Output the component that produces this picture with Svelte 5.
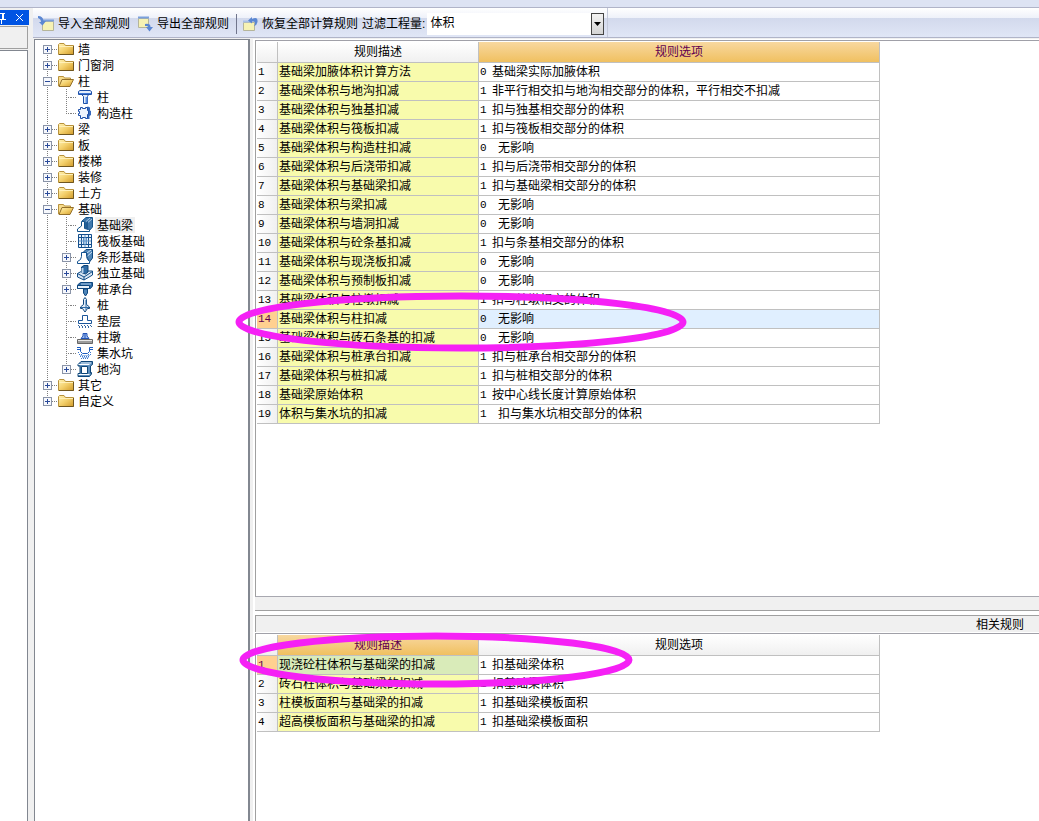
<script lang="ts">
  type TreeNode = { label: string; icon: string; open?: boolean; children?: TreeNode[] };
  type Rule = { name: string; code: number; option: string; indent?: boolean };

  const tree: TreeNode[] = $state([
    { label: '墙', icon: 'folder', children: [] },
    { label: '门窗洞', icon: 'folder', children: [] },
    {
      label: '柱',
      icon: 'folder',
      open: true,
      children: [
        { label: '柱', icon: 'column' },
        { label: '构造柱', icon: 'tie' },
      ],
    },
    { label: '梁', icon: 'folder', children: [] },
    { label: '板', icon: 'folder', children: [] },
    { label: '楼梯', icon: 'folder', children: [] },
    { label: '装修', icon: 'folder', children: [] },
    { label: '土方', icon: 'folder', children: [] },
    {
      label: '基础',
      icon: 'folder',
      open: true,
      children: [
        { label: '基础梁', icon: 'beam' },
        { label: '筏板基础', icon: 'raft' },
        { label: '条形基础', icon: 'strip', children: [] },
        { label: '独立基础', icon: 'isolated', children: [] },
        { label: '桩承台', icon: 'cap', children: [] },
        { label: '桩', icon: 'pile' },
        { label: '垫层', icon: 'cushion' },
        { label: '柱墩', icon: 'pier' },
        { label: '集水坑', icon: 'sump' },
        { label: '地沟', icon: 'trench', children: [] },
      ],
    },
    { label: '其它', icon: 'folder', children: [] },
    { label: '自定义', icon: 'folder', children: [] },
  ]);

  const rules: Rule[] = [
    { name: '基础梁加腋体积计算方法', code: 0, option: '基础梁实际加腋体积' },
    { name: '基础梁体积与地沟扣减', code: 1, option: '非平行相交扣与地沟相交部分的体积，平行相交不扣减' },
    { name: '基础梁体积与独基扣减', code: 1, option: '扣与独基相交部分的体积' },
    { name: '基础梁体积与筏板扣减', code: 1, option: '扣与筏板相交部分的体积' },
    { name: '基础梁体积与构造柱扣减', code: 0, option: '无影响', indent: true },
    { name: '基础梁体积与后浇带扣减', code: 1, option: '扣与后浇带相交部分的体积' },
    { name: '基础梁体积与基础梁扣减', code: 1, option: '扣与基础梁相交部分的体积' },
    { name: '基础梁体积与梁扣减', code: 0, option: '无影响', indent: true },
    { name: '基础梁体积与墙洞扣减', code: 0, option: '无影响', indent: true },
    { name: '基础梁体积与砼条基扣减', code: 1, option: '扣与条基相交部分的体积' },
    { name: '基础梁体积与现浇板扣减', code: 0, option: '无影响', indent: true },
    { name: '基础梁体积与预制板扣减', code: 0, option: '无影响', indent: true },
    { name: '基础梁体积与柱墩扣减', code: 1, option: '扣与柱墩相交的体积' },
    { name: '基础梁体积与柱扣减', code: 0, option: '无影响', indent: true },
    { name: '基础梁体积与砖石条基的扣减', code: 0, option: '无影响', indent: true },
    { name: '基础梁体积与桩承台扣减', code: 1, option: '扣与桩承台相交部分的体积' },
    { name: '基础梁体积与桩扣减', code: 1, option: '扣与桩相交部分的体积' },
    { name: '基础梁原始体积', code: 1, option: '按中心线长度计算原始体积' },
    { name: '体积与集水坑的扣减', code: 1, option: '扣与集水坑相交部分的体积', indent: true },
  ];

  const related: Rule[] = [
    { name: '现浇砼柱体积与基础梁的扣减', code: 1, option: '扣基础梁体积' },
    { name: '砖石柱体积与基础梁的扣减', code: 1, option: '扣基础梁体积' },
    { name: '柱模板面积与基础梁的扣减', code: 1, option: '扣基础梁模板面积' },
    { name: '超高模板面积与基础梁的扣减', code: 1, option: '扣基础梁模板面积' },
  ];

  let currentNode = $state('基础梁');
  let currentRule = $state(13);
  let currentRelated = $state(0);
</script>

{#snippet nodeIcon(kind: string, open: boolean)}
  <svg class="icon" viewBox="0 0 16 16" aria-hidden="true">
    {#if kind === 'folder' && open}
      <path d="M.5 13V3.500h5l1 1.500h6v3" fill="#f7dc8c" stroke="#b8923c" />
      <path d="M1 13.500 4 6.500h11.500l-3.500 7z" fill="url(#gold)" stroke="#94702a" />
    {:else if kind === 'folder'}
      <path d="M.5 13.500V3.500l1-1H6l1.500 2h8v9z" fill="url(#gold)" stroke="#b8923c" />
      <path d="M1 5.500h14" stroke="#fff0b8" />
      <path d="M1 13.500h14.500V5" fill="none" stroke="#6f5620" />
    {:else if kind === 'column'}
      <path d="M1.500 2.500 3 1.500h10l1.500 1v3h-13zM4.500 5.500h7L10.500 7.500v7h-4v-7z" fill="#e3edfc" stroke="#1c4fa8" />
      <path d="M9.500 8v6" stroke="#5b8ee0" stroke-width="2" />
      <path d="M2 4.500h12" stroke="#3f78d6" />
    {:else if kind === 'tie'}
      <path d="m8 3 3-1.500 2 1v3l1 .5v4l-1.500 1v3L10 14z" fill="#3569bd" />
      <path d="M3.500 2.500h2v1h3v-1h2v3h1v4h-1v4h-2v-1h-3v1h-2v-3h-2v-2h1v-2h-1v-2h2z" fill="#eef4fd" stroke="#1c4fa8" />
    {:else if kind === 'beam'}
      <path d="M5 4 9 .5h6.500V10L12 14H8V5z" fill="#3f78ad" stroke="#14548c" />
      <path d="M9 4.500 13 1M9 7l6-5" stroke="#a9c9e6" />
      <path d="M.5 14.500V12L4.500 9V4.500h3v7l5 1v2z" fill="#fff" stroke="#14548c" />
      <path d="M8.500 11.500V6L11 4v9z" fill="#1f5b93" />
    {:else if kind === 'raft'}
      <path d="M1.500 1.500h13v13h-13z" fill="#eaf2fa" stroke="#134f8d" />
      <path d="M4.500 2v12M11.500 2v12M2 4.500h12M2 11.500h12" fill="none" stroke="#134f8d" />
      <path d="M8 2v12M2 8h12M6.500 5v6M9.500 5v6" stroke="#5e93c7" />
    {:else if kind === 'strip'}
      <path d="M6 3.500 9 .5h6.500V9L12.500 13 10 8V4z" fill="#5187b9" stroke="#0e477f" />
      <path d="m10 4 4-3M10.500 7 15 3" stroke="#c8def3" />
      <path d="M.5 14.500v-2l3-2 1-3v-4h5v4l1 3 2 2v2z" fill="#fff" stroke="#12518f" />
    {:else if kind === 'isolated'}
      <path d="M.5 8.500 5 6h10.500v4L7 15l-6.500-3z" fill="#d8e6f4" stroke="#114c86" />
      <path d="M.5 8.500 7 12l8.500-5.500M7 12v3" fill="none" stroke="#114c86" />
      <path d="M4.500 2 7 .5h4V7L8.500 9l-4-1.500z" fill="#2f6ba5" stroke="#0d4275" />
      <path d="M5.500 3v5" stroke="#b7d2ec" stroke-width="2" />
    {:else if kind === 'cap'}
      <path d="m.5 4 3-2.500h12V5l-2 2.500H.5z" fill="#2e6ba6" stroke="#0e477f" />
      <path d="M.5 4.500h12v3H.5z" fill="#e8f1fa" stroke="#0e477f" />
      <path d="M4 3h10" stroke="#b7d2ec" />
      <path d="M6.500 8h4v4L8.500 15l-2-3z" fill="#4d84b8" stroke="#0e477f" />
    {:else if kind === 'pile'}
      <path d="m8 .5 1.500 2v5l3 2.500v1.500h-2L8 15l-2.500-3.500h-2V10l3-2.500v-5z" fill="#e2edf8" stroke="#0e477f" />
      <path d="M9 3v10M4 10.500h8" stroke="#2e6ba6" />
    {:else if kind === 'cushion'}
      <path d="M5.500 7.500v-5h5v5h4v3h-13v-3z" fill="#fff" stroke="#1b569a" />
      <path d="M1 12.500h14M2 14.500h12" stroke="#3566a0" stroke-dasharray="1 2" />
      <path d="M2 13.500h13" stroke="#3566a0" stroke-dasharray="1 2" />
    {:else if kind === 'pier'}
      <path d="M.5 10.500h15v4H.5z" fill="#9c9c9c" stroke="#666" />
      <path d="M1 11.500h14" stroke="#e8e8e8" />
      <path d="M4 9.500 6 7V4.500h4V7l2 2.500z" fill="#9cbcf0" stroke="#2353b5" />
      <path d="M8 5v4" stroke="#2353b5" />
    {:else if kind === 'sump'}
      <path d="M0 4.500h3M13 4.500h3" stroke="#1b5cc0" />
      <path d="M0 2.500h3.500v4l2 2h5l2-2v-4H16" fill="none" stroke="#1b5cc0" />
      <path d="M1 7.500h2M13 7.500h2M2 9.500h3M11 9.500h3M3 11.500h10M4 13.500h8" stroke="#3b78cf" stroke-dasharray="1 1" />
      <path d="M3 10.500h10M5 12.500h7" stroke="#9fc0ec" />
    {:else if kind === 'trench'}
      <path d="m1 3.500 3-3h11.500v3l-2 1.500v7l1-.5V13l-2 2.500H1v-3h2V5H1z" fill="#5e8fbc" stroke="#0f4677" />
      <path d="M4 2h10" stroke="#dce9f5" />
      <path d="M1.500 3.500h11M1.500 13.500h11" stroke="#fff" />
      <path d="M4.500 5.500h6v7h-6z" fill="#fff" stroke="#0f4677" />
    {/if}
  </svg>
{/snippet}

{#snippet branch(nodes: TreeNode[])}
  <ul>
    {#each nodes as node}
      <li>
        <div class="node">
          {#if node.children}
            <button
              class="toggle"
              class:open={node.open}
              aria-label={node.open ? '折叠' : '展开'}
              onclick={() => (node.open = !node.open)}
            ></button>
          {:else}
            <span class="leaf"></span>
          {/if}
          <span class="stem"></span>
          {@render nodeIcon(node.icon, !!node.open)}
          <button
            class="label"
            class:current={node.label === currentNode}
            onclick={() => (currentNode = node.label)}
          >{node.label}</button>
        </div>
        {#if node.open && node.children?.length}
          {@render branch(node.children)}
        {/if}
      </li>
    {/each}
  </ul>
{/snippet}

{#snippet ruleTable(rows: Rule[], selected: number, activeCol: number, pick: (i: number) => void)}
  <table class:by-name={activeCol === 0}>
    <colgroup>
      <col class="col-no" />
      <col class="col-name" />
      <col class="col-option" />
    </colgroup>
    <thead>
      <tr>
        <th></th>
        <th class:active={activeCol === 0}>规则描述</th>
        <th class:active={activeCol === 1}>规则选项</th>
      </tr>
    </thead>
    <tbody>
      {#each rows as row, i}
        <tr class:selected={i === selected} onclick={() => pick(i)}>
          <th class="num" scope="row">{i + 1}</th>
          <td class="name">{row.name}</td>
          <td class="option">
            <span class="code" class:wide={row.indent}>{row.code}</span>{row.option}
          </td>
        </tr>
      {/each}
    </tbody>
  </table>
{/snippet}

<div class="window">
  <svg class="defs" aria-hidden="true">
    <defs>
      <linearGradient id="gold" x1="0" y1="0" x2="1" y2="1">
        <stop offset="0" stop-color="#fff3b5" />
        <stop offset=".5" stop-color="#f3cf6a" />
        <stop offset="1" stop-color="#d09a2a" />
      </linearGradient>
    </defs>
  </svg>

  <div class="menu-strip"></div>

  <div class="body">
    <aside class="dock">
      <div class="dock-title">
        <button aria-label="固定">
          <svg width="12" height="13" viewBox="0 0 12 13"><path d="M3 2.500h7M4.500 2v6M7.500 2v6M8.500 2v6M2 8.500h9M6.500 9v4" stroke="#fff" fill="none" /></svg>
        </button>
        <button aria-label="关闭">
          <svg width="9" height="9" viewBox="0 0 9 9"><path d="m1 1 7 7M8 1 1 8" stroke="#fff" fill="none" /></svg>
        </button>
      </div>
      <div class="dock-bar"></div>
      <div class="dock-body"></div>
    </aside>

    <main>
      <div class="toolbar">
        <div class="tools">
          <button class="tool">
            <svg class="icon" viewBox="0 0 16 16">
              <path d="M4.500 5.500h11v9h-11z" fill="#f6f2b4" stroke="#b5b59a" />
              <path d="M4 4.500h12" stroke="#7ba0dc" stroke-width="2" />
              <path d="M0 0q5 0 5.500 5H8L4.500 9.500 1 6h2Q3 3 0 2z" fill="#5b87d2" />
            </svg>
            导入全部规则
          </button>
          <button class="tool">
            <svg class="icon" viewBox="0 0 16 16">
              <path d="M1.500 2.500h10v9h-10z" fill="#f6f2b4" stroke="#b5b59a" />
              <path d="M1 1.500h11" stroke="#7ba0dc" stroke-width="2" />
              <path d="M8 8q5.500-1 5.500 3H16l-3.500 4.500L9 11h2q0-1.500-3-1z" fill="#5b87d2" />
            </svg>
            导出全部规则
          </button>
          <span class="divider"></span>
          <button class="tool">
            <svg class="icon" viewBox="0 0 16 16">
              <path d="M1.500 6.500h11v8h-11z" fill="#f6f2b4" stroke="#b5b59a" />
              <path d="M1 5.500h9" stroke="#a9c1e8" stroke-width="2" />
              <path d="M6 4.500 10 1v2q6-3 5.500 3-.5 3-3.500 4 2-3 0-4.500H10v2z" fill="#5b87d2" />
            </svg>
            恢复全部计算规则
          </button>
          <label for="quantity">过滤工程量:</label>
          <div class="combo">
            <select id="quantity">
              <option>体积</option>
            </select>
            <span class="arrow" aria-hidden="true">
              <svg width="7" height="4" viewBox="0 0 7 4"><path d="M0 0h7L3.500 4z" /></svg>
            </span>
          </div>
        </div>
      </div>

      <div class="content">
        <nav class="tree">
          {@render branch(tree)}
        </nav>

        <div class="panes">
          <section class="pane rules">
            {@render ruleTable(rules, currentRule, 1, (i) => (currentRule = i))}
          </section>
          <div class="scroll-strip"></div>
          <h2>相关规则</h2>
          <section class="pane related">
            {@render ruleTable(related, currentRelated, 0, (i) => (currentRelated = i))}
          </section>
        </div>
      </div>
    </main>
  </div>

  <!-- hand-drawn marks around the linked rules -->
  <svg class="marks" aria-hidden="true">
    <ellipse cx="461" cy="322" rx="222" ry="26" />
    <ellipse cx="436" cy="660" rx="193" ry="24" />
  </svg>
</div>

<style>
  :global(body) {
    margin: 0;
  }

  .window {
    position: relative;
    display: flex;
    flex-direction: column;
    min-height: 100vh;
    overflow: hidden;
    background: #f0f0f0;
    color: #000;
    font: 12px/16px "Liberation Sans", "Noto Sans CJK SC", sans-serif;
  }

  button {
    margin: 0;
    padding: 0;
    border: 0;
    background: none;
    color: inherit;
    font: inherit;
    white-space: nowrap;
  }

  .defs {
    position: absolute;
    width: 0;
    height: 0;
  }

  .icon {
    width: 16px;
    height: 16px;
    flex: none;
  }

  .menu-strip {
    height: 7px;
    background: #dde3f3;
    border-bottom: 1px solid #b0b4c8;
  }

  .body {
    flex: 1;
    display: flex;
  }

  /* left dock */
  .dock {
    width: 29px;
    margin-right: 4px;
    padding-top: 2px;
    display: flex;
    flex-direction: column;
  }

  .dock-title {
    height: 15px;
    display: flex;
    align-items: center;
    justify-content: flex-end;
    gap: 8px;
    padding-right: 5px;
    overflow: hidden;
    background: #0054e3;
  }

  .dock-title button {
    display: flex;
  }

  .dock-bar {
    height: 21px;
    margin: 1px 1px 1px 0;
    border: 1px solid #a0a0a0;
    border-left: 0;
  }

  .dock-body {
    flex: 1;
    margin-right: 1px;
    background: #fff;
    border: 1px solid #828790;
    border-width: 1px 1px 0 0;
  }

  main {
    flex: 1;
    min-width: 0;
    display: flex;
    flex-direction: column;
  }

  /* toolbar */
  .toolbar {
    height: 29px;
    display: flex;
    background: linear-gradient(#fff, #eef1fa 10px, #d2d9ec 10px, #e0e6f6);
    border-bottom: 1px solid #b0b4c8;
  }

  .tools {
    display: flex;
    align-items: center;
    padding: 2px 3px 0 5px;
    border-right: 1px solid #c4c9da;
  }

  .tool {
    display: flex;
    align-items: center;
    gap: 4px;
    margin-right: 7px;
    line-height: 18px;
  }

  .divider {
    width: 1px;
    height: 20px;
    margin-right: 5px;
    background: #70758c;
  }

  .tools .divider + .tool {
    margin-right: 4px;
  }

  .tools label {
    line-height: 18px;
  }

  .combo {
    position: relative;
    width: 177px;
    margin-left: 2px;
  }

  select {
    appearance: none;
    display: block;
    width: 100%;
    height: 22px;
    padding: 0 20px 1px 3px;
    border: 0;
    border-radius: 0;
    background: #fff;
    color: #000;
    font: inherit;
  }

  .arrow {
    position: absolute;
    top: 0;
    right: 0;
    bottom: 0;
    width: 11px;
    display: flex;
    align-items: center;
    justify-content: center;
    background: linear-gradient(#f2f2f2, #d4d4d4);
    border: 1px solid #444;
    pointer-events: none;
  }

  .content {
    flex: 1;
    display: flex;
    padding-top: 1px;
  }

  /* component tree */
  .tree {
    width: 213px;
    margin-left: 1px;
    padding-top: 1px;
    background: #fff;
    border: solid #828790;
    border-width: 1px 2px 0 1px;
  }

  .tree ul {
    margin: 0;
    padding: 0 0 0 8px;
    list-style: none;
  }

  .tree ul ul {
    padding-left: 19px;
  }

  .tree li {
    background: repeating-linear-gradient(#808080 0 1px, transparent 1px 2px) 4px 0 / 1px 100% no-repeat;
  }

  .tree > ul > li:first-child {
    background-position: 4px 8px;
  }

  .tree li:last-child {
    background-size: 1px 9px;
  }

  .node {
    display: flex;
    align-items: center;
    height: 16px;
  }

  .toggle {
    width: 9px;
    height: 9px;
    border: 1px solid #8a94a8;
    background:
      linear-gradient(#2a4a9a, #2a4a9a) center / 5px 1px no-repeat,
      linear-gradient(#2a4a9a, #2a4a9a) center / 1px 5px no-repeat,
      #f6f8fc;
  }

  .toggle.open {
    background: linear-gradient(#2a4a9a, #2a4a9a) center / 5px 1px no-repeat, #f6f8fc;
  }

  .leaf,
  .stem {
    height: 1px;
    background: repeating-linear-gradient(90deg, #808080 0 1px, transparent 1px 2px);
  }

  .leaf {
    width: 5px;
    margin-left: 4px;
  }

  .stem {
    width: 5px;
    margin-right: 1px;
  }

  .label {
    height: 16px;
    margin-left: 2px;
    padding: 1px 2px 0;
  }

  .label.current {
    background: #f0f0f0;
  }

  /* rule grids */
  .panes {
    flex: 1;
    min-width: 0;
    margin-left: 3px;
    padding: 1px 0 0 2px;
    display: flex;
    flex-direction: column;
    background: #fff;
  }

  .pane {
    padding: 1px 0 0 1px;
    background: #fff;
    border-top: 1px solid #a0a0a8;
    border-left: 1px solid #a0a0a0;
  }

  .rules {
    flex: 1;
    border-bottom: 1px solid #a8a8b0;
  }

  .related {
    min-height: 186px;
  }

  .scroll-strip {
    height: 13px;
    background: #f0f0f0;
    border-bottom: 1px solid #a0a0a0;
  }

  h2 {
    height: 16px;
    margin: 4px 0 1px;
    padding-right: 15px;
    background: #f0f0f0;
    border: 1px solid #a0a0a0;
    border-width: 1px 0 0 1px;
    font: inherit;
    line-height: 18px;
    text-align: right;
  }

  table {
    width: 623px;
    table-layout: fixed;
    border-collapse: separate;
    border-spacing: 0;
  }

  .col-no { width: 21px; }
  .col-name { width: 201px; }
  .col-option { width: 401px; }

  th,
  td {
    height: 18px;
    padding: 0;
    border: solid #c0c0c0;
    border-width: 0 1px 1px 0;
    font-weight: normal;
    line-height: 18px;
    white-space: nowrap;
  }

  thead th {
    height: 20px;
    line-height: 20px;
    background: linear-gradient(#fff, #f0f0f0);
  }

  thead .active {
    background: linear-gradient(#f8d8a0, #f0c060);
    color: #600050;
  }

  .num {
    padding-left: 1px;
    background: linear-gradient(90deg, #fff, #f0f0f0);
    text-align: left;
  }

  .num,
  .code {
    font-family: "Liberation Mono", monospace;
    font-size: 11px;
  }

  .name {
    padding-left: 1px;
    background: #f8fbac;
  }

  .option {
    padding-left: 1px;
  }

  .code {
    display: inline-block;
    width: 12px;
    vertical-align: top;
  }

  .code.wide {
    width: 18px;
  }

  .selected .num {
    background: #ffd090;
    color: #600050;
  }

  .selected .option {
    background: #e0efff;
  }

  .by-name .selected .name {
    background: #d9ebb9;
  }

  .by-name .selected .option {
    background: #fff;
  }

  .marks {
    position: absolute;
    inset: 0;
    width: 100%;
    height: 100%;
    pointer-events: none;
  }

  .marks ellipse {
    fill: none;
    stroke: #f520f5;
    stroke-width: 7;
  }
</style>
